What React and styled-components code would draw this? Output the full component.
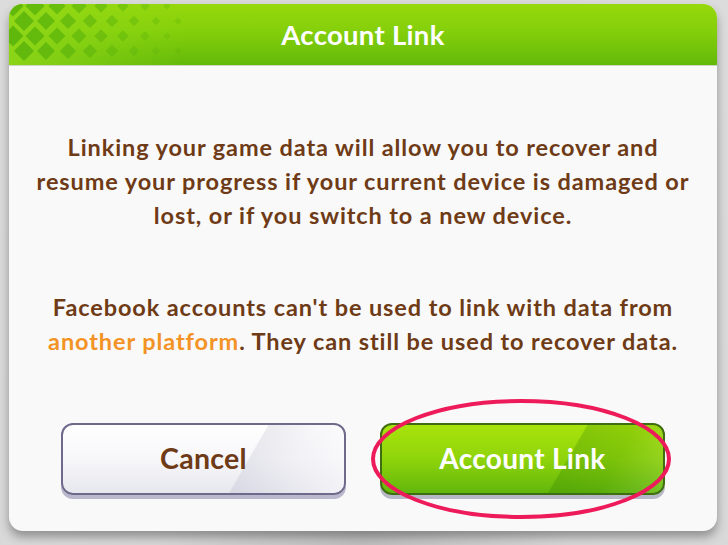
import React from "react";
import styled, { createGlobalStyle } from "styled-components";

const Global = createGlobalStyle`
  html, body {
    margin: 0;
    padding: 0;
    background: #d3d3d3;
  }
  body {
    font-family: Lato, "Open Sans", sans-serif;
  }
`;

const Backdrop = styled.div`
  width: 728px;
  height: 545px;
  box-sizing: border-box;
  padding: 4px 11px 0 9px;
  background: radial-gradient(ellipse at 50% 100%, #bdbdbd 0%, #d6d6d6 40%, #dcdcdc 100%);
  overflow: hidden;
`;

const Panel = styled.div`
  position: relative;
  width: 708px;
  height: 527px;
  background: #f9f9f9;
  border-radius: 14px;
  box-shadow: 0 6px 10px rgba(60, 60, 60, 0.45);
  display: flex;
  flex-direction: column;
  overflow: hidden;
`;

const Header = styled.div`
  position: relative;
  height: 61px;
  flex-shrink: 0;
  display: flex;
  align-items: center;
  justify-content: center;
  background: linear-gradient(180deg, #96d80b 0%, #84cf0b 45%, #63b90a 100%);
  border-bottom: 1px solid #cfd6c4;
  overflow: hidden;
`;

const Pattern = styled.svg`
  position: absolute;
  left: 0;
  top: 0;
`;

const Title = styled.h1`
  position: relative;
  margin: 0;
  color: #ffffff;
  font-size: 27.5px;
  font-weight: 700;
  letter-spacing: 0.3px;
`;

const Body = styled.div`
  flex: 1;
  display: flex;
  flex-direction: column;
  align-items: center;
  padding-top: 64px;
`;

const Paragraph = styled.p`
  margin: 0 0 ${(p) => p.$gap || 0}px;
  text-align: center;
  white-space: nowrap;
  color: #6e3b16;
  font-size: 23.5px;
  font-weight: 700;
  letter-spacing: 0.9px;
  line-height: 34px;
`;

const Highlight = styled.span`
  color: #f39325;
`;

const Actions = styled.div`
  position: relative;
  display: flex;
  justify-content: center;
  gap: 34px;
  margin-top: 65px;
`;

const Button = styled.button`
  position: relative;
  width: 285px;
  height: 72px;
  border-radius: 12px;
  border: 2px solid ${(p) => (p.$primary ? "#3f6d12" : "#6f6a8c")};
  background: ${(p) =>
    p.$primary
      ? "linear-gradient(180deg, #a8e30b 0%, #8fd40b 50%, #62b60c 100%)"
      : "linear-gradient(180deg, #ffffff 0%, #f7f7fa 50%, #e6e6ee 100%)"};
  box-shadow: 0 4px 0 ${(p) => (p.$primary ? "#b6b8c8" : "#b9b8cc")};
  color: ${(p) => (p.$primary ? "#ffffff" : "#6e3b16")};
  font-family: Lato, "Open Sans", sans-serif;
  font-size: ${(p) => (p.$primary ? 28 : 28.5)}px;
  font-weight: 700;
  letter-spacing: 0.3px;
  cursor: pointer;
  overflow: hidden;
  &::after {
    content: "";
    position: absolute;
    top: 0;
    bottom: 0;
    right: 0;
    width: 45%;
    background: ${(p) =>
      p.$primary
        ? "linear-gradient(120deg, transparent 0%, transparent 30%, rgba(40,120,0,0.25) 31%, rgba(40,120,0,0.18) 60%, rgba(255,255,255,0.12) 100%)"
        : "linear-gradient(120deg, transparent 0%, transparent 30%, rgba(150,150,175,0.18) 31%, rgba(200,200,215,0.12) 60%, rgba(255,255,255,0.5) 100%)"};
    pointer-events: none;
  }
`;

const Label = styled.span`
  position: relative;
  z-index: 1;
  top: -1px;
`;

const Ring = styled.svg`
  position: absolute;
  left: 307px;
  top: -25px;
  pointer-events: none;
  z-index: 2;
`;

function HeaderPattern() {
  const cells = [];
  for (let r = 0; r < 4; r++) {
    for (let c = 0; c < 8; c++) {
      const x = c * 22 + (r % 2 ? 11 : 0) + 4;
      const y = r * 15 + 2;
      const fade = Math.max(0, 1 - x / 160);
      const s = 7.5 * (0.35 + 0.65 * fade);
      cells.push(
        <rect
          key={`${r}-${c}`}
          x={x - s}
          y={y - s}
          width={s * 2}
          height={s * 2}
          transform={`rotate(45 ${x} ${y})`}
          fill="#5db50b"
          opacity={0.3 + 0.65 * fade}
        />
      );
    }
  }
  return (
    <Pattern width="175" height="61" viewBox="0 0 175 61">
      <defs>
        <linearGradient id="lite" x1="0" x2="1" y1="0" y2="0">
          <stop offset="0" stopColor="#8fd718" stopOpacity="0.9" />
          <stop offset="1" stopColor="#8fd718" stopOpacity="0" />
        </linearGradient>
      </defs>
      <rect x="0" y="0" width="175" height="61" fill="url(#lite)" />
      {cells}
    </Pattern>
  );
}

export default function App() {
  return (
    <>
      <Global />
      <Backdrop>
        <Panel>
          <Header>
            <HeaderPattern />
            <Title>Account Link</Title>
          </Header>
          <Body>
            <Paragraph $gap={58}>
              Linking your game data will allow you to recover and
              <br />
              resume your progress if your current device is damaged or
              <br />
              lost, or if you switch to a new device.
            </Paragraph>
            <Paragraph>
              Facebook accounts can't be used to link with data from
              <br />
              <Highlight>another platform</Highlight>. They can still be used to
              recover data.
            </Paragraph>
            <Actions>
              <Button>
                <Label>Cancel</Label>
              </Button>
              <Button $primary>
                <Label>Account Link</Label>
              </Button>
              <Ring width="306" height="122" viewBox="0 0 306 122">
                <ellipse
                  cx="153"
                  cy="61"
                  rx="148"
                  ry="58"
                  fill="none"
                  stroke="#ee1b5b"
                  strokeWidth="4"
                />
              </Ring>
            </Actions>
          </Body>
        </Panel>
      </Backdrop>
    </>
  );
}
